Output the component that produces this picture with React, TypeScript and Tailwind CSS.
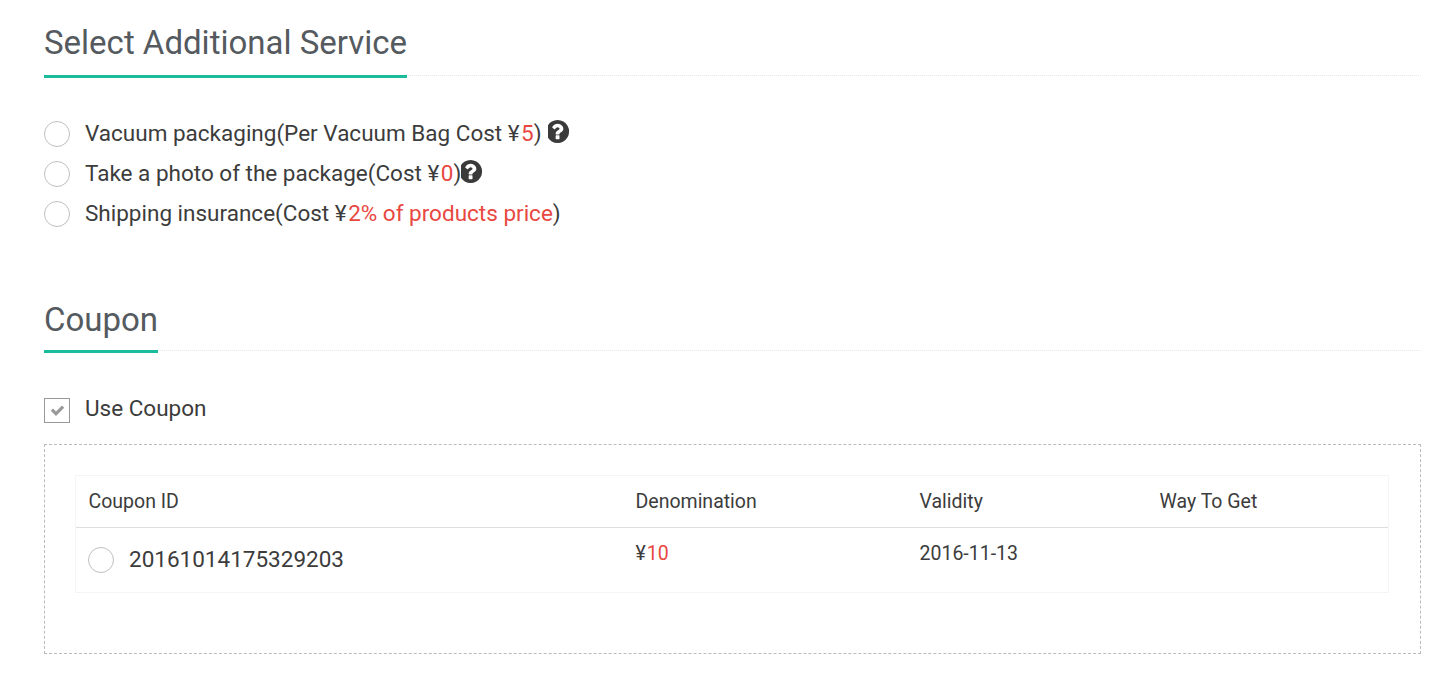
import type { ReactNode } from 'react'

function Heading({ title, pad }: { title: string; pad: string }) {
  return (
    <div className="flex h-[76px] border-b border-dotted border-[#e8e8e8]">
      <h2 className={`h-[78px] shrink-0 border-b-[3px] border-[#1abc9c] text-[33px] leading-[42px] font-normal text-[#555a5f] ${pad}`}>
        {title}
      </h2>
    </div>
  )
}

function Radio() {
  return <span className="h-[26px] w-[26px] shrink-0 rounded-full border border-[#c0c0c0] bg-white" />
}

function HelpIcon({ className }: { className: string }) {
  return (
    <svg className={className} viewBox="128 128 1536 1536" fill="#3a3a3a">
      <path d="M896 1376v-192q0-14-9-23t-23-9h-192q-14 0-23 9t-9 23v192q0 14 9 23t23 9h192q14 0 23-9t9-23zm256-672q0-88-55.5-163t-138.5-116-170-41q-243 0-371 213-15 24 8 42l132 100q7 6 19 6 16 0 25-12 53-68 86-92 34-24 86-24 48 0 85.5 26t37.5 59q0 38-20 61t-68 45q-63 28-115.5 86.5t-52.5 125.5v36q0 14 9 23t23 9h192q14 0 23-9t9-23q0-19 21.5-49.5t54.5-49.5q32-18 49-28.5t46-35 44.5-48 28-60.5 12.5-81zm384 192q0 209-103 385.5t-279.5 279.5-385.5 103-385.5-103-279.5-279.5-103-385.5 103-385.5 279.5-279.5 385.5-103 385.5 103 279.5 279.5 103 385.5z" />
    </svg>
  )
}

function Option({ children }: { children: ReactNode }) {
  return (
    <label className="flex h-10 items-center gap-[15px] text-[22.5px] text-[#3c3c3c]">
      <Radio />
      <span className="flex items-center whitespace-pre">{children}</span>
    </label>
  )
}

export default function App() {
  return (
    <div className="min-h-[688px] bg-white pr-[18px] pl-[44px] font-['Roboto',sans-serif]">
      <Heading title="Select Additional Service" pad="pt-[22px]" />

      <div className="mt-[38px]">
        <Option>
          Vacuum packaging(Per Vacuum Bag Cost ¥<span className="ml-[1.5px] text-[#e8483f]">5</span>)
          <HelpIcon className="mb-[6px] ml-[6px] h-[23px] w-[23px]" />
        </Option>
        <Option>
          Take a photo of the package(Cost ¥<span className="ml-[1.5px] text-[#e8483f]">0</span>)
          <HelpIcon className="mb-[6px] h-[23px] w-[23px]" />
        </Option>
        <Option>
          Shipping insurance(Cost ¥<span className="ml-[1.5px] text-[#e8483f]">2% of products price</span>)
        </Option>
      </div>

      <div className="mt-[41px]">
        <Heading title="Coupon" pad="pt-[24px]" />
      </div>

      <label className="mt-[39px] flex h-10 items-center gap-[15px] text-[22.5px] text-[#3c3c3c]">
        <span className="flex h-[25px] w-[26px] items-center justify-center border border-[#999]">
          <svg className="h-[15px] w-[15px]" viewBox="0 0 1792 1792" fill="#999">
            <path d="M1671 566q0 40-28 68l-724 724-136 136q-28 28-68 28t-68-28l-136-136-362-362q-28-28-28-68t28-68l136-136q28-28 68-28t68 28l294 295 656-657q28-28 68-28t68 28l136 136q28 28 28 68z" />
          </svg>
        </span>
        <span className="pb-[2px]">Use Coupon</span>
      </label>

      <div className="mt-[14px] h-[210px] border border-dashed border-[#bbb] pt-[30px] pr-[31px] pl-[30px]">
        <div className="border border-[#f5f5f5]">
          <div className="grid h-[52px] grid-cols-[547px_284px_240px_1fr] items-center border-b border-[#ddd] pl-[12.5px] text-[19.5px] text-[#3c3c3c]">
            <span>Coupon ID</span>
            <span>Denomination</span>
            <span>Validity</span>
            <span>Way To Get</span>
          </div>
          <div className="grid h-[64px] grid-cols-[547px_284px_240px_1fr] pl-[12.5px] text-[19.5px] text-[#3c3c3c]">
            <div className="-ml-[0.5px] flex items-center gap-[15px] text-[22.5px]">
              <Radio />
              <span>20161014175329203</span>
            </div>
            <span className="pt-[11px]">
              ¥<span className="ml-px text-[#e8483f]">10</span>
            </span>
            <span className="pt-[11px]">2016-11-13</span>
            <span />
          </div>
        </div>
      </div>
    </div>
  )
}
